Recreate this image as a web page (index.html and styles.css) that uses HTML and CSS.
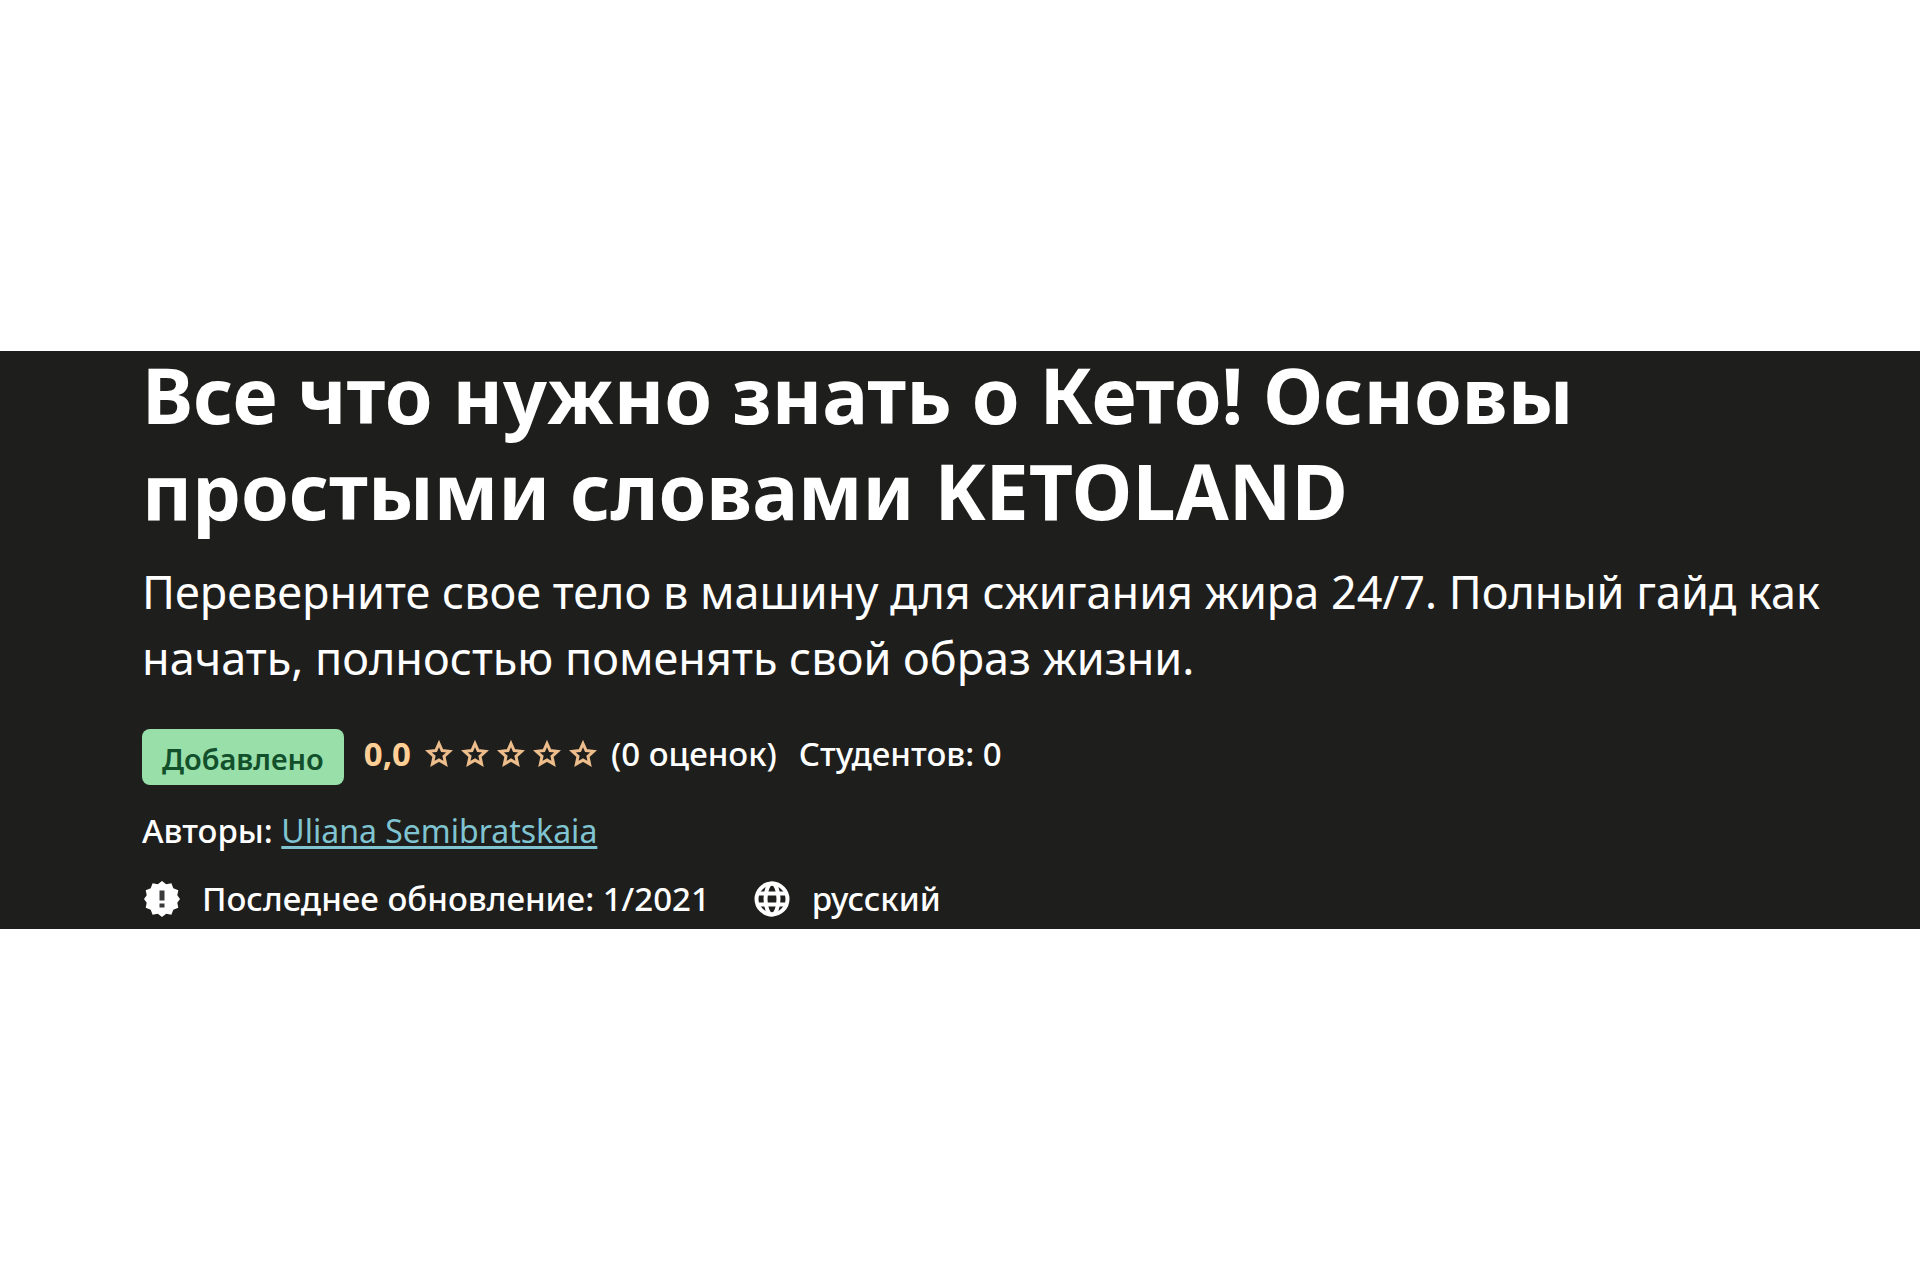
FILE: index.html
```html
<!DOCTYPE html>
<html lang="ru">
<head>
    <meta charset="UTF-8">
    <meta name="viewport" content="width=device-width, initial-scale=1.0">
    <title>Все что нужно знать о Кето!</title>
    <link rel="stylesheet" href="styles.css">
</head>
<body>
    <svg class="sprite" aria-hidden="true">
        <symbol id="star" viewBox="0 0 28 28">
            <path d="M14 3.5l3.1 7 7.6.8-5.7 5.1 1.6 7.5L14 20.1l-6.600 3.800 1.600-7.500-5.700-5.100 7.600-.8z" fill="none" stroke="currentColor" stroke-width="3"/>
        </symbol>
    </svg>
    <main class="hero">
        <h1 class="title">Все что нужно знать о Кето! Основы простыми словами KETOLAND</h1>
        <p class="subtitle">Переверните свое тело в машину для сжигания жира 24/7. Полный гайд как начать, полностью поменять свой образ жизни.</p>
        <div class="rating-row">
            <span class="badge">Добавлено</span>
            <span class="rating">0,0</span>
            <span class="stars">
                <svg><use href="#star"/></svg>
                <svg><use href="#star"/></svg>
                <svg><use href="#star"/></svg>
                <svg><use href="#star"/></svg>
                <svg><use href="#star"/></svg>
            </span>
            <span class="reviews">(0 оценок)</span>
            <span class="students">Студентов: 0</span>
        </div>
        <p class="authors">Авторы: <a href="#">Uliana Semibratskaia</a></p>
        <div class="meta">
            <span class="meta-item">
                <svg class="icon" viewBox="0 0 36 36">
                    <path d="M18 0l4.200 3.300 5.200-1 1.900 5 5 1.900-1 5.100L36 18l-2.700 3.700 1 5.100-5 1.900-1.900 5-5.200-1L18 36l-4.200-3.300-5.200 1-1.900-5-5-1.900 1-5.100L0 18l2.700-3.700-1-5.100 5-1.900 1.900-5 5.200 1z" fill="#fff"/>
                    <path d="M15.500 9.500h5v10h-5zM15.500 22.500h5v4h-5z" fill="#3a3a3a"/>
                </svg>
                <span>Последнее обновление: 1/2021</span>
            </span>
            <span class="meta-item">
                <svg class="icon" viewBox="0 0 36 36" fill="none" stroke="#fff" stroke-width="4">
                    <circle cx="18" cy="18" r="15.500"/>
                    <ellipse cx="18" cy="18" rx="6.500" ry="15.500"/>
                    <path d="M4 12.500h28M4 23.500h28"/>
                </svg>
                <span>русский</span>
            </span>
        </div>
    </main>
</body>
</html>
```
FILE: styles.css
```css
body {
    margin: 0;
    min-height: 100vh;
    display: flex;
    flex-direction: column;
    justify-content: center;
    background-color: #fff;
    font-family: "Noto Sans", "Open Sans", sans-serif;
}
.sprite {
    display: none;
}
.hero {
    display: flow-root;
    background-color: #1e1e1c;
    color: #fff;
    padding: 0 60px 8px 142px;
    font-size: 33px;
    font-weight: 500;
    line-height: 44px;
}
.title {
    margin: -4px 0 0;
    font-size: 77px;
    font-weight: 700;
    line-height: 96px;
}
.subtitle {
    margin: 20px 0 0;
    font-size: 45px;
    font-weight: 400;
    line-height: 66px;
}
.rating-row {
    display: flex;
    align-items: flex-start;
    margin-top: 38px;
    line-height: 50px;
}
.badge {
    padding: 8px 20px 4px;
    border-radius: 8px;
    background-color: #98dfaa;
    color: #12502c;
    font-size: 29px;
    font-weight: 600;
    line-height: 44px;
}
.rating {
    margin-left: 20px;
    color: #ffcf95;
    font-weight: 700;
}
.stars {
    display: flex;
    align-items: center;
    gap: 8px;
    height: 50px;
    margin: 0 14px;
    color: #edbd8c;
}
.stars svg {
    width: 28px;
    height: 28px;
}
.students {
    margin-left: 22px;
}
.authors {
    margin: 24px 0;
}
.authors a {
    color: #7fc4d0;
    font-size: 32px;
    font-weight: 400;
    text-decoration: underline;
    text-decoration-thickness: 3px;
    text-underline-offset: 3px;
}
.meta {
    display: flex;
    gap: 44px;
    padding-left: 2px;
}
.meta-item {
    display: flex;
    align-items: center;
    gap: 22px;
}
.icon {
    width: 36px;
    height: 36px;
}
```
